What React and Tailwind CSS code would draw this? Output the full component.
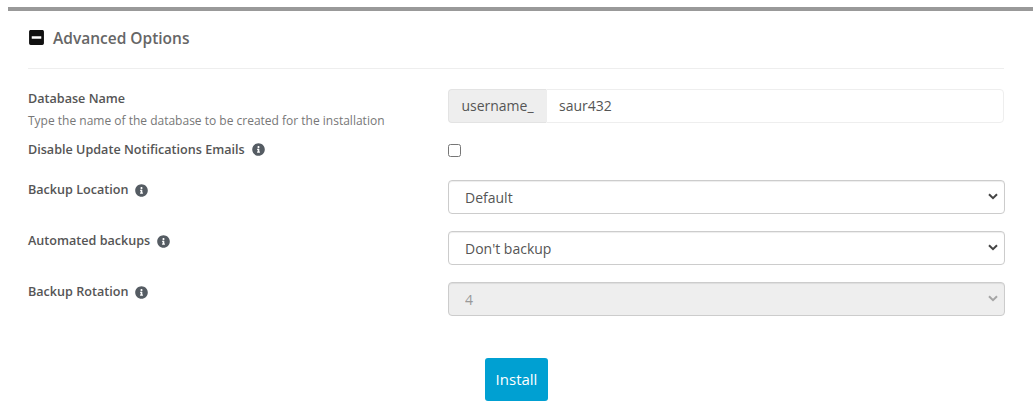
import { FaInfoCircle, FaMinusSquare } from 'react-icons/fa';

const Info = () => <FaInfoCircle className="ml-[7px] text-[#555c63]" size={13} />;

const Chevron = ({ disabled }) => (
  <svg
    viewBox="0 0 10 7"
    className={`pointer-events-none absolute right-[7px] top-[13px] h-[7px] w-[10px] ${disabled ? 'text-[#a5a5a5]' : 'text-[#444444]'}`}
    fill="none"
    stroke="currentColor"
    strokeWidth="2"
  >
    <path d="M1 1.2l4 4 4-4" />
  </svg>
);

const Select = ({ value, disabled }) => (
  <div className="relative w-[557px]">
    <select
      disabled={disabled}
      defaultValue={value}
      className={`h-[34px] w-full appearance-none rounded-[4px] border border-[#cccccc] pl-4 pt-[2px] text-sm outline-none shadow-[inset_0_1px_1px_rgba(0,0,0,0.075)] ${disabled ? 'bg-[#eeeeee] text-[#999999]' : 'bg-white text-[#555555]'}`}
    >
      <option>{value}</option>
    </select>
    <Chevron disabled={disabled} />
  </div>
);

const App = () => {
  return (
    <div className="h-[415px] w-[1033px] overflow-hidden bg-white font-['Open_Sans',sans-serif] text-[#555555]">
      <div className="ml-2 mt-[7px] h-1 bg-[#999999]" />

      <div className="px-7">
        <div className="flex h-[58px] w-[976px] items-center border-b border-[#eeeeee] pb-1">
          <FaMinusSquare className="text-[#111111]" size={17} />
          <h3 className="ml-2 text-[15.5px] font-semibold leading-6 text-[#666666]">Advanced Options</h3>
        </div>

        <div className="mt-5 flex h-[34px] w-[976px] justify-between">
          <div>
            <div className="text-[12.6px] font-semibold leading-5">Database Name</div>
            <div className="mt-1 text-xs leading-[16px] text-[#777777]">Type the name of the database to be created for the installation</div>
          </div>
          <div className="flex h-[34px] w-[556px]">
            <span className="flex w-[98px] items-center justify-center rounded-l-[4px] border border-r-0 border-[#e3e3e3] bg-[#eeeeee] text-sm">username_</span>
            <input
              defaultValue="saur432"
              className="min-w-0 flex-1 rounded-r-[4px] border border-[#eeeeee] pl-3 text-sm text-[#555555] outline-none"
            />
          </div>
        </div>

        <div className="mt-[17px] flex h-[20px] w-[976px] items-center justify-between">
          <div className="flex items-center text-[12.6px] font-semibold">
            Disable Update Notifications Emails
            <Info />
          </div>
          <div className="flex w-[556px] items-center">
            <input type="checkbox" className="h-[13px] w-[13px]" />
          </div>
        </div>

        <div className="mt-5 flex w-[977px] flex-col gap-[17px]">
          <div className="flex justify-between">
            <div className="flex h-[20px] items-center text-[12.6px] font-semibold">
              Backup Location
              <Info />
            </div>
            <Select value="Default" />
          </div>
          <div className="flex justify-between">
            <div className="flex h-[20px] items-center text-[12.6px] font-semibold">
              Automated backups
              <Info />
            </div>
            <Select value="Don't backup" />
          </div>
          <div className="flex justify-between">
            <div className="flex h-[20px] items-center text-[12.6px] font-semibold">
              Backup Rotation
              <Info />
            </div>
            <Select value="4" disabled />
          </div>
        </div>

        <button className="ml-[457px] mt-[42px] h-[43px] w-[63px] rounded-[3px] bg-[#00a0d2] text-[15px] text-white">Install</button>
      </div>
    </div>
  );
};

export default App;
